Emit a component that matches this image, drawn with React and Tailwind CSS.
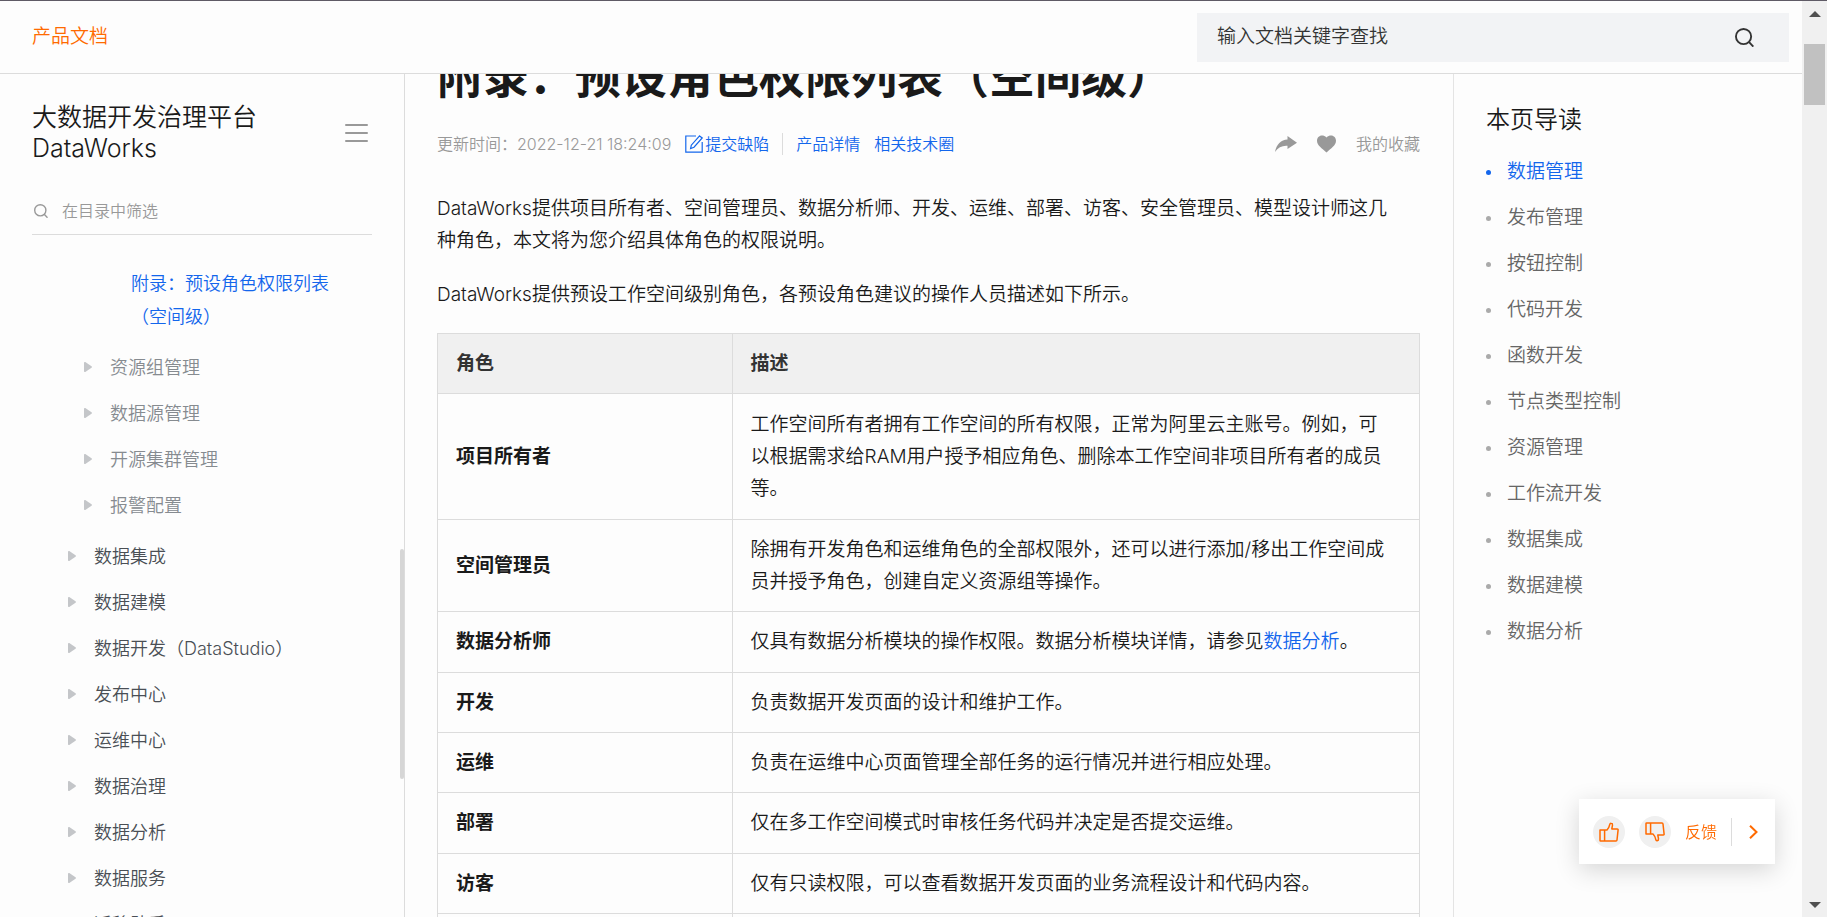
import React from "react";

const subMenus = ["资源组管理", "数据源管理", "开源集群管理", "报警配置"];

const menus = [
  "数据集成",
  "数据建模",
  "数据开发（DataStudio）",
  "发布中心",
  "运维中心",
  "数据治理",
  "数据分析",
  "数据服务",
  "迁移助手",
];

const anchors = [
  "数据管理",
  "发布管理",
  "按钮控制",
  "代码开发",
  "函数开发",
  "节点类型控制",
  "资源管理",
  "工作流开发",
  "数据集成",
  "数据建模",
  "数据分析",
];

const roles = [
  {
    name: "项目所有者",
    height: "h-[126px]",
    desc: (
      <>
        工作空间所有者拥有工作空间的所有权限，正常为阿里云主账号。例如，可
        <br />
        以根据需求给RAM用户授予相应角色、删除本工作空间非项目所有者的成员
        <br />
        等。
      </>
    ),
  },
  {
    name: "空间管理员",
    height: "h-[92px]",
    desc: (
      <>
        除拥有开发角色和运维角色的全部权限外，还可以进行添加/移出工作空间成
        <br />
        员并授予角色，创建自定义资源组等操作。
      </>
    ),
  },
  {
    name: "数据分析师",
    height: "h-[61px]",
    desc: (
      <>
        仅具有数据分析模块的操作权限。数据分析模块详情，请参见
        <a href="#analysis" className="text-[#1366ec]">
          数据分析
        </a>
        。
      </>
    ),
  },
  { name: "开发", height: "h-[60px]", desc: "负责数据开发页面的设计和维护工作。" },
  { name: "运维", height: "h-[60px]", desc: "负责在运维中心页面管理全部任务的运行情况并进行相应处理。" },
  { name: "部署", height: "h-[61px]", desc: "仅在多工作空间模式时审核任务代码并决定是否提交运维。" },
  { name: "访客", height: "h-[60px]", desc: "仅有只读权限，可以查看数据开发页面的业务流程设计和代码内容。" },
];

const SearchIcon = ({ className }) => (
  <svg viewBox="0 0 20 20" className={className} fill="none" stroke="currentColor" strokeWidth="2">
    <circle cx="9" cy="9" r="8" />
    <path d="M14.600 14.600 19.300 19.600" />
  </svg>
);

const ThumbIcon = ({ className }) => (
  <svg viewBox="0 0 20 20" className={className} fill="none" stroke="currentColor" strokeWidth="1.5" strokeLinejoin="round">
    <path d="M1 8h4.600v11H1.600Q1 19 1 18.400zM5.600 8h2.400c1.400-1.300 2.200-3 2.700-5.400.2-.9.800-1.400 1.500-1.300.9.1 1.400.9 1.300 1.900L12.800 7h5.500q.9 0 .8.9L18 18q-.1 1-1 1H5.600z" />
  </svg>
);

const MenuRow = ({ label, className }) => (
  <li>
    <a href="#menu" className={`flex h-[46px] items-center gap-[18px] text-[18px] ${className}`}>
      <svg viewBox="0 0 8 10" className="h-[10px] w-2 shrink-0" fill="#c4c6c9">
        <path d="M0 .8C0 .1.700-.2 1.300.1L7.500 4.300c.5.4.5 1 0 1.400L1.300 9.900C.7 10.200 0 9.900 0 9.200z" />
      </svg>
      {label}
    </a>
  </li>
);

const Header = () => (
  <header className="flex h-[73px] shrink-0 items-center justify-between border-b border-[#dcdcdc] pr-[13px] pl-8">
    <a href="#docs" className="text-[19px] text-[#ff6a00]">
      产品文档
    </a>
    <div className="flex h-[49px] w-[592px] items-center bg-[#f2f3f5] pr-[35px] pl-5">
      <input
        type="text"
        aria-label="输入文档关键字查找"
        placeholder="输入文档关键字查找"
        className="min-w-0 flex-1 bg-transparent text-[19px] outline-none placeholder:text-[#333]"
      />
      <button type="button" aria-label="搜索" className="text-[#333]">
        <SearchIcon className="h-[19px] w-[19px]" />
      </button>
    </div>
  </header>
);

const Sidebar = () => (
  <nav className="relative w-[405px] shrink-0 overflow-hidden border-r border-[#dcdcdc]">
    <div className="flex items-center justify-between px-8 pt-7">
      <h2 className="text-[25px] leading-[31px] text-[#1a1a1a]">
        大数据开发治理平台
        <br />
        DataWorks
      </h2>
      <button type="button" aria-label="目录" className="mr-1 flex w-[23px] flex-col gap-[6px]">
        <span className="h-[2px] rounded bg-[#999]" />
        <span className="h-[2px] rounded bg-[#999]" />
        <span className="h-[2px] rounded bg-[#999]" />
      </button>
    </div>
    <label className="mx-8 mt-[23px] flex h-12 items-center gap-[14px] border-b border-[#dcdcdc] pl-[2px] text-[#999]">
      <SearchIcon className="h-[14px] w-[14px]" />
      <input
        type="text"
        aria-label="在目录中筛选"
        placeholder="在目录中筛选"
        className="min-w-0 flex-1 bg-transparent text-[16px] outline-none placeholder:text-[#999]"
      />
    </label>
    <a href="#current" className="mt-8 ml-[131px] block w-[210px] text-[18px] leading-[33px] text-[#1366ec]">
      附录：预设角色权限列表（空间级）
    </a>
    <ul className="mt-[11px] pl-[84px]">
      {subMenus.map((label) => (
        <MenuRow key={label} label={label} className="text-[#868b90]" />
      ))}
    </ul>
    <ul className="mt-[5px] pl-[68px]">
      {menus.map((label) => (
        <MenuRow key={label} label={label} className="text-[#4a4f55]" />
      ))}
    </ul>
    <div className="absolute top-[475px] right-0 h-[230px] w-1 rounded bg-[#d6d6d6]" />
  </nav>
);

const Article = () => (
  <main className="min-w-0 flex-1 overflow-hidden pr-[33px] pl-8 text-[19px] leading-8 text-[#1a1a1a]">
    <h1 className="-mt-7 text-[46px] leading-[60px] font-bold whitespace-nowrap">
      附录：预设角色权限列表（空间级）
    </h1>
    <div className="mt-[26px] flex h-6 items-center text-[16px] leading-6 text-[#999]">
      <span>更新时间：2022-12-21 18:24:09</span>
      <a href="#report" className="ml-[14px] flex items-center gap-[2px] text-[#1366ec]">
        <svg viewBox="0 0 18 18" className="h-[18px] w-[18px]" fill="none" stroke="currentColor" strokeWidth="1.2">
          <path d="M11 1H.8v16.200h16.400V7" />
          <path d="M14.600.900 17.200 2.900 9 12.200 5.600 13.600 6.300 10.200z" />
        </svg>
        提交缺陷
      </a>
      <span className="mx-[13px] h-[22px] w-px bg-[#dcdcdc]" />
      <a href="#detail" className="text-[#1366ec]">
        产品详情
      </a>
      <a href="#community" className="ml-[14px] text-[#1366ec]">
        相关技术圈
      </a>
      <button type="button" aria-label="分享" className="ml-auto">
        <svg viewBox="0 0 22 16" className="h-4 w-[22px]" fill="#999">
          <path d="M12.500 0 22 6.800 12.500 13V9.800C7.500 9.300 3 11.500 0 16 1.500 8.500 6 4 12.500 3.600z" />
        </svg>
      </button>
      <button type="button" aria-label="收藏" className="ml-5">
        <svg viewBox="0 0 20 18" className="h-[18px] w-[19px]" fill="#999">
          <path d="M10 2.200C11.500.500 13 0 14.800 0 17.800 0 20 2.400 20 5.600c0 4.800-5.300 8-10 12.400C5.300 13.600 0 10.400 0 5.600 0 2.400 2.200 0 5.200 0 7 0 8.500.500 10 2.200z" />
        </svg>
      </button>
      <a href="#favorites" className="ml-5">
        我的收藏
      </a>
    </div>
    <p className="mt-[37px]">
      DataWorks提供项目所有者、空间管理员、数据分析师、开发、运维、部署、访客、安全管理员、模型设计师这几
      <br />
      种角色，本文将为您介绍具体角色的权限说明。
    </p>
    <p className="mt-[22px]">DataWorks提供预设工作空间级别角色，各预设角色建议的操作人员描述如下所示。</p>
    <table className="mt-[22px] w-full table-fixed border-collapse text-left">
      <thead>
        <tr className="h-[60px] bg-[#f0f0f0] text-[#333]">
          <th className="w-[30%] border border-[#dcdcdc] px-[18px] py-3 font-bold">角色</th>
          <th className="border border-[#dcdcdc] px-[18px] py-3 font-bold">描述</th>
        </tr>
      </thead>
      <tbody>
        {roles.map((role) => (
          <tr key={role.name} className={role.height}>
            <th className="border border-[#dcdcdc] px-[18px] py-3 font-bold">{role.name}</th>
            <td className="border border-[#dcdcdc] px-[18px] py-3">{role.desc}</td>
          </tr>
        ))}
        <tr className="h-[60px]">
          <th className="border border-[#dcdcdc]" />
          <td className="border border-[#dcdcdc]" />
        </tr>
      </tbody>
    </table>
  </main>
);

const Outline = () => (
  <aside className="w-[349px] shrink-0 overflow-hidden border-l border-[#e4e4e4] px-8 pt-[30px]">
    <h3 className="text-[24px] leading-8 text-[#1a1a1a]">本页导读</h3>
    <ul className="mt-[13px] text-[19px]">
      {anchors.map((label, i) => (
        <li key={label}>
          <a
            href="#anchor"
            className={`flex h-[46px] items-center gap-4 ${i === 0 ? "text-[#1366ec]" : "text-[#666]"}`}
          >
            <span className={`h-[5px] w-[5px] rounded-full ${i === 0 ? "bg-[#1366ec]" : "bg-[#aaa]"}`} />
            {label}
          </a>
        </li>
      ))}
    </ul>
  </aside>
);

const Feedback = () => (
  <div className="fixed right-[52px] bottom-[53px] flex h-[65px] w-[196px] items-center bg-white pl-[14px] text-[#ff6a00] shadow-[0_6px_24px_rgba(0,0,0,0.16)]">
    <button type="button" aria-label="有帮助" className="flex h-8 w-8 items-center justify-center rounded-full bg-[#f0f0f0]">
      <ThumbIcon className="h-5 w-5" />
    </button>
    <button type="button" aria-label="没帮助" className="ml-[14px] flex h-8 w-8 items-center justify-center rounded-full bg-[#f0f0f0]">
      <ThumbIcon className="h-5 w-5 -scale-y-100" />
    </button>
    <button type="button" className="ml-[14px] text-[16px]">
      反馈
    </button>
    <span className="ml-[14px] h-7 w-px bg-[#dcdcdc]" />
    <button type="button" aria-label="收起" className="ml-[17px]">
      <svg viewBox="0 0 9 14" className="h-[14px] w-[9px]" fill="none" stroke="currentColor" strokeWidth="2">
        <path d="M1 .8 7.500 7 1 13.200" />
      </svg>
    </button>
  </div>
);

const PageScrollbar = () => (
  <div className="flex w-[25px] shrink-0 flex-col items-center bg-[#f0f0f0]">
    <svg viewBox="0 0 12 6" className="mt-[10px] h-[6px] w-3" fill="#505050">
      <path d="M6 0l6 6H0z" />
    </svg>
    <div className="mt-[27px] h-[61px] w-[21px] bg-[#c1c1c1]" />
    <svg viewBox="0 0 12 6" className="mt-auto mb-[9px] h-[6px] w-3" fill="#505050">
      <path d="M6 6 0 0h12z" />
    </svg>
  </div>
);

const App = () => {
  return (
    <div className="flex h-screen overflow-hidden border-t border-[#5f5b66] bg-[#fdfdfd] font-['Inter','Noto_Sans_CJK_SC',sans-serif] font-[350]">
      <div className="flex min-w-0 flex-1 flex-col">
        <Header />
        <div className="flex min-h-0 flex-1">
          <Sidebar />
          <Article />
          <Outline />
        </div>
      </div>
      <PageScrollbar />
      <Feedback />
    </div>
  );
};

export default App;
